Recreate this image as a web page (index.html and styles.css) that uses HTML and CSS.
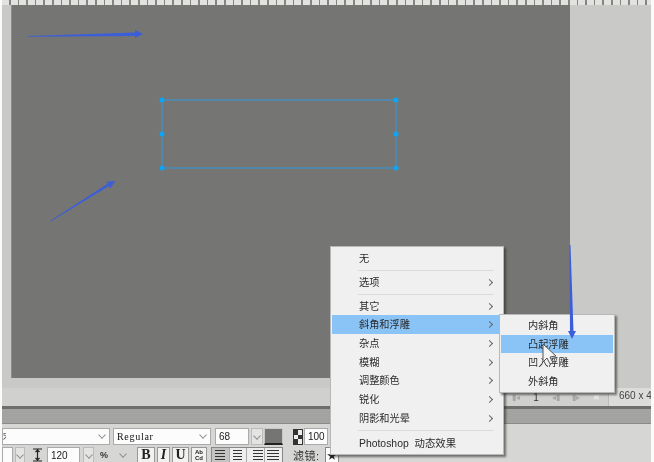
FILE: index.html
```html
<!DOCTYPE html>
<html lang="zh">
<head>
    <meta charset="UTF-8">
    <meta name="viewport" content="width=device-width, initial-scale=1.0">
    <title>Photoshop 动态效果</title>
    <link rel="stylesheet" href="styles.css">
</head>
<body>
    <div class="app">
        <div class="ruler"></div>
        <div class="stage">
            <div class="canvas">
                <svg class="marks" width="559" height="373" viewBox="11 5 559 373">
                    <polygon class="arrow" points="28,36 135,32.5 135,30 143,34 135,38 135,36 28,36.8"/>
                    <polygon class="arrow" points="50,221 108,183.5 106,181.7 115.5,181 110,188.5 109,186 50.6,221.6"/>
                    <rect class="sel" x="162" y="100" width="234" height="68"/>
                    <circle class="handle" cx="162" cy="100" r="2.5"/>
                    <circle class="handle" cx="396" cy="100" r="2.5"/>
                    <circle class="handle" cx="162" cy="134" r="2.5"/>
                    <circle class="handle" cx="396" cy="134" r="2.5"/>
                    <circle class="handle" cx="162" cy="168" r="2.5"/>
                    <circle class="handle" cx="396" cy="168" r="2.5"/>
                </svg>
            </div>
        </div>
        <div class="status">
            <div class="pager">
                <span class="pg">▮◂</span>
                <span class="pg num">1</span>
                <span class="pg">◂▮</span>
                <span class="pg">▮▸</span>
                <span class="pg light">✖</span>
            </div>
            <div class="size">660 x 440</div>
        </div>
        <div class="titlebar"></div>
        <div class="panel">
            <div class="row">
                <div class="field w108"><span class="clip">宋</span><span class="chev"></span></div>
                <div class="field w98"><span class="mono">Regular</span><span class="chev"></span></div>
                <div class="field w34">68</div>
                <div class="chevbox w12"><span class="chev"></span></div>
                <div class="swatch"></div>
                <svg class="opacity" width="10" height="16" viewBox="0 0 10 16">
                    <rect x="0.5" y="0.5" width="9" height="15" fill="#eee" stroke="#333"/>
                    <rect x="1" y="1" width="4" height="5" fill="#333"/>
                    <rect x="5" y="6" width="4" height="4" fill="#333"/>
                    <rect x="1" y="10" width="4" height="5" fill="#333"/>
                </svg>
                <div class="field w25">100</div>
            </div>
            <div class="row second">
                <div class="field w13"></div>
                <div class="chevbox w10"><span class="chev"></span></div>
                <svg class="leading" width="9" height="14" viewBox="0 0 9 14">
                    <path d="M0 1H9M0 13H9M4.5 1V13M2.5 4L4.5 2L6.5 4M2.5 10L4.5 12L6.5 10" fill="none" stroke="#222" stroke-width="1.2"/>
                </svg>
                <div class="field w33">120</div>
                <div class="chevbox w11"><span class="chev"></span></div>
                <div class="pct"><span>%</span><span class="chev"></span></div>
                <div class="btn bold">B</div>
                <div class="btn ital">I</div>
                <div class="btn under">U</div>
                <div class="btn ab">Ab<br>Cd</div>
                <div class="aligns">
                    <div class="align left"></div>
                    <div class="align center"></div>
                    <div class="align right"></div>
                    <div class="align full"></div>
                </div>
                <span class="filter">滤镜:</span>
                <div class="filterbox">★</div>
            </div>
        </div>

        <ul class="menu main-menu">
            <li class="item">无</li>
            <li class="sep"></li>
            <li class="item more">选项</li>
            <li class="sep"></li>
            <li class="item more">其它</li>
            <li class="item more active">斜角和浮雕</li>
            <li class="item more">杂点</li>
            <li class="item more">模糊</li>
            <li class="item more">调整颜色</li>
            <li class="item more">锐化</li>
            <li class="item more">阴影和光晕</li>
            <li class="sep last"></li>
            <li class="item wide">Photoshop 动态效果</li>
        </ul>
        <ul class="menu sub-menu">
            <li class="item">内斜角</li>
            <li class="item active">凸起浮雕</li>
            <li class="item">凹入浮雕</li>
            <li class="item">外斜角</li>
        </ul>

        <svg class="overlay" width="654" height="462" viewBox="0 0 654 462">
            <polygon class="arrow" points="569.5,245 570.5,245 573.5,331 576,331 572,339 568,331 570,331"/>
            <path d="M543 344V362L547 358L550 364L553 363L550 357L556 356Z" fill="#f4f4f4" stroke="#555" stroke-width="1"/>
        </svg>
    </div>
</body>
</html>
```

FILE: styles.css
```css
* { box-sizing: border-box; }
html, body { margin: 0; padding: 0; background: #fbfbfb; overflow: hidden; }
body { font-family: "Liberation Sans", "Noto Sans CJK SC", sans-serif; color: #333; }
ul { list-style: none; margin: 0; padding: 0; }

.app { position: relative; width: 654px; height: 462px; padding: 0 3px 0 2px; display: flex; flex-direction: column; overflow: hidden; filter: blur(0.35px); }

.ruler { height: 5px; flex: none; background: repeating-linear-gradient(90deg, #e2e2e0 0, #e2e2e0 7px, #85857f 7px, #85857f 8.6px); }

.stage { flex: none; height: 383px; padding: 0 81px 10px 9px; background: #c9c9c7; }
.canvas { height: 373px; background: #757573; border-left: 1px solid #8d8d8b; position: relative; }
.marks { position: absolute; left: -1px; top: 0; }
.arrow { fill: #3c5ed8; }
.sel { fill: none; stroke: #4b8cb8; stroke-width: 1.6; }
.handle { fill: #0ea5f5; }

.status { flex: none; height: 18px; background: #d0d0ce; display: flex; justify-content: flex-end; align-items: stretch; }
.pager { display: flex; align-items: center; padding-right: 2px; font-size: 8px; color: #a8a8a8; }
.pg { width: 20px; text-align: center; white-space: nowrap; }
.pg.num { font-size: 10px; color: #333; }
.pg.light { color: #e8e8e8; }
.size { width: 43px; padding: 2px 0 0 10px; white-space: nowrap; overflow: hidden; font-size: 10px; background: #dcdcda; border-left: 1px solid #bbb; color: #444; }

.titlebar { flex: none; height: 18px; background: #a3a3a1; border-top: 3px solid #6e6e6c; border-bottom: 1px solid #8a8a88; }

.panel { flex: 1; background: #d6d6d4; padding-top: 4px; font-size: 10px; }
.row { display: flex; align-items: flex-start; height: 17px; }
.row.second { margin-top: 2px; height: 17px; }

.field { height: 17px; background: #fcfcfc; border: 1px solid #aaa; padding: 2px 0 0 3px; font-size: 10px; line-height: 12px; display: flex; justify-content: space-between; overflow: hidden; color: #222; }
.w108 { width: 108px; padding-left: 0; }
.w98 { width: 98px; margin-left: 3px; }
.w34 { width: 34px; margin-left: 4px; }
.w25 { width: 24px; margin-left: 1px; }
.w13 { width: 11px; }
.w33 { width: 33px; margin-left: 5px; }
.clip { font-size: 8px; width: 3px; overflow: hidden; }
.mono { font-family: "Liberation Serif", serif; font-size: 10px; letter-spacing: 0.7px; color: #111; }

.chev { width: 6px; height: 6px; margin: 1px 4px 0 0; border-right: 1px solid #888; border-bottom: 1px solid #888; transform: rotate(45deg) scale(0.9); flex: none; }
.chevbox { height: 17px; background: #e4e4e2; border: 1px solid #bbb; display: flex; justify-content: center; padding: 3px 0 0 4px; }
.w12 { width: 12px; margin-left: 2px; }
.w10 { width: 10px; margin-left: 2px; }
.w11 { width: 11px; margin-left: 3px; }

.swatch { width: 19px; height: 17px; margin-left: 1px; background: #757573; border: 1px solid #c8c8c8; border-bottom: 2px solid #222; }
.opacity { margin: 1px 0 0 10px; flex: none; }
.leading { margin: 1px 0 0 8px; flex: none; }

.pct { width: 33px; height: 17px; margin-left: 3px; padding: 3px 0 0 3px; display: flex; justify-content: space-between; font-size: 9px; font-weight: bold; }
.btn { height: 16px; margin-left: 2px; background: #f2f2f0; border: 1px solid #999; text-align: center; font-family: "Liberation Serif", serif; font-weight: bold; font-size: 14px; line-height: 14px; color: #222; overflow: hidden; }
.bold { width: 18px; margin-left: 7px; }
.ital { width: 13px; font-style: italic; }
.under { width: 17px; }
.ab { width: 16px; font-family: "Liberation Sans", sans-serif; font-size: 6px; line-height: 6px; padding-top: 1px; }

.aligns { display: flex; margin-left: 4px; border: 1px solid #888; height: 16px; }
.align { width: 17.5px; height: 14px; background-color: #eee; border-right: 1px solid #aaa; background-image: repeating-linear-gradient(180deg, #333 0, #333 1px, transparent 1px, transparent 3px); background-position: center; background-repeat: no-repeat; background-size: 12px 10px; background-origin: content-box; }
.align.left { background-color: #c4c4c2; background-size: 10px 10px; background-position: 3px 2px; }
.align.center { background-size: 9px 10px; }
.align.right { background-size: 10px 10px; background-position: 6px 2px; }
.align.full { border-right: 0; background-size: 12px 10px; }

.filter { margin: 0 0 0 10px; width: 32px; font-size: 11px; letter-spacing: 0.5px; color: #333; }
.filterbox { width: 14px; height: 17px; background: #fcfcfc; border: 1px solid #888; font-size: 10px; line-height: 15px; text-align: center; color: #222; }

.menu { position: absolute; background: #f0f0f0; border: 1px solid #b8b8b8; box-shadow: 2px 2px 2px rgba(40, 40, 40, 0.6); padding: 2px 1px; font-size: 10.2px; color: #2a2a2a; }
.main-menu { left: 330px; top: 246px; width: 174px; height: 209px; }
.sub-menu { left: 499px; top: 314px; width: 116px; height: 79px; padding-top: 1px; }
.item { position: relative; height: 18.7px; line-height: 19.7px; padding-left: 27px; white-space: nowrap; }
.item.wide { font-size: 10.4px; word-spacing: 3px; }
.item.active { background: #8ac4f7; }
.item.more::after { content: ""; position: absolute; right: 10px; top: 7px; width: 4px; height: 4px; border-top: 1px solid #666; border-right: 1px solid #666; transform: rotate(45deg); }
.sep { height: 1px; margin: 2px 8px 2px 26px; background: #dcdcdc; }
.sep.last { margin-bottom: 3px; }
.main-menu .item:first-child { height: 19px; }

.overlay { position: absolute; left: 0; top: 0; pointer-events: none; }
```
